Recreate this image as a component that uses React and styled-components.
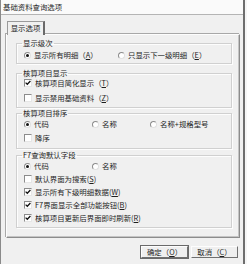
import React from "react";
import styled, { createGlobalStyle } from "styled-components";

const GlobalStyle = createGlobalStyle`
  * { box-sizing: border-box; }
  html, body { margin: 0; padding: 0; background: #f0f0f0; }
  body {
    font-family: "Noto Sans CJK SC", "Liberation Sans", sans-serif;
    font-size: 7.4px;
    color: #1e1e1e;
  }
`;

function App() {
  return (
    <>
      <GlobalStyle />
      <Window>
        <TitleBar>基础资料查询选项</TitleBar>
        <Body>
          <TabStrip>
            <Tab>显示选项</Tab>
          </TabStrip>
          <Panel>
            <Group $height={25} $pad={2} $top={0}>
              <Legend>显示级次</Legend>
              <Row>
                <Radio checked $width={94}>
                  显示所有明细（<u>A</u>）
                </Radio>
                <Radio>
                  只显示下一级明细（<u>E</u>）
                </Radio>
              </Row>
            </Group>

            <Group $height={39} $pad={0} $gap={3} $top={5}>
              <Legend>核算项目显示</Legend>
              <Row>
                <Check checked>
                  核算项目简化显示（<u>T</u>）
                </Check>
              </Row>
              <Row>
                <Check>
                  显示禁用基础资料（<u>Z</u>）
                </Check>
              </Row>
            </Group>

            <Group $height={40} $pad={1} $gap={2} $top={1}>
              <Legend>核算项目排序</Legend>
              <Row>
                <Radio checked $width={68}>
                  代码
                </Radio>
                <Radio $width={58}>名称</Radio>
                <Radio>名称+规格型号</Radio>
              </Row>
              <Row>
                <Check>降序</Check>
              </Row>
            </Group>

            <Group $height={77} $pad={1} $gap={1} $top={2}>
              <Legend>F7查询默认字段</Legend>
              <Row>
                <Radio checked $width={68}>
                  代码
                </Radio>
                <Radio>名称</Radio>
              </Row>
              <Row>
                <Check>
                  默认界面为搜索(<u>S</u>)
                </Check>
              </Row>
              <Row>
                <Check checked>
                  显示所有下级明细数据(<u>W</u>)
                </Check>
              </Row>
              <Row>
                <Check checked>
                  F7界面显示全部功能按钮(<u>B</u>)
                </Check>
              </Row>
              <Row>
                <Check checked>
                  核算项目更新后界面即时刷新(<u>R</u>)
                </Check>
              </Row>
            </Group>
          </Panel>
          <Buttons>
            <Button $default>
              确定（<u>O</u>）
            </Button>
            <Button>
              取消（<u>C</u>）
            </Button>
          </Buttons>
        </Body>
      </Window>
    </>
  );
}

function Radio({ checked, children, $width }) {
  return (
    <Option $width={$width}>
      <RadioMark>{checked && <Dot />}</RadioMark>
      <span>{children}</span>
    </Option>
  );
}

function Check({ checked, children }) {
  return (
    <Option>
      <CheckMark>
        {checked && (
          <svg width="6" height="6" viewBox="0 0 6 6">
            <path
              d="M0.6 2.6 L2.3 4.3 L5.4 1"
              fill="none"
              stroke="#111"
              strokeWidth="1.3"
            />
          </svg>
        )}
      </CheckMark>
      <span>{children}</span>
    </Option>
  );
}

export default App;

const Window = styled.div`
  width: 247px;
  height: 264px;
  display: flex;
  flex-direction: column;
  background: #f0f0f0;
  border-left: 1px solid #8a8a8a;
  border-right: 3px solid #f6f6f6;
  position: relative;
  &::after {
    content: "";
    position: absolute;
    top: 0;
    bottom: 0;
    right: -1px;
    width: 2px;
    background: #6e6e6e;
  }
`;

const TitleBar = styled.div`
  height: 15px;
  line-height: 14px;
  padding-left: 2px;
  background: #fafafa;
  border-bottom: 1px solid #b4b4b4;
  flex-shrink: 0;
`;

const Body = styled.div`
  flex: 1;
  padding: 6px 0 0 5px;
  display: flex;
  flex-direction: column;
`;

const TabStrip = styled.div`
  display: flex;
  padding-left: 1px;
  height: 13px;
`;

const Tab = styled.div`
  width: 38px;
  height: 14px;
  line-height: 12px;
  text-align: center;
  background: #f0f0f0;
  border-top: 1px solid #9a9a9a;
  border-left: 1px solid #9a9a9a;
  border-right: 2px solid #6a6a6a;
  position: relative;
  z-index: 1;
`;

const Panel = styled.div`
  width: 234px;
  height: 204px;
  padding: 4px 0 0 9px;
  border-top: 1px solid #fdfdfd;
  border-left: 1px solid #fdfdfd;
  border-right: 1px solid #8c8c8c;
  border-bottom: 1px solid #8c8c8c;
  box-shadow: inset -1px -1px 0 #c4c4c4, -1px -1px 0 #a8a8a8;
  display: flex;
  flex-direction: column;
`;

const Group = styled.fieldset`
  margin: ${(p) => p.$top}px 0 0 0;
  width: 216px;
  height: ${(p) => p.$height}px;
  padding: ${(p) => p.$pad}px 0 0 7px;
  border: 1px solid #d0d0d0;
  box-shadow: 1px 1px 0 #fdfdfd, inset 1px 1px 0 #fdfdfd;
  display: flex;
  flex-direction: column;
  gap: ${(p) => p.$gap || 0}px;
  min-width: 0;
`;

const Legend = styled.legend`
  padding: 0 1px;
  margin-left: -2px;
  line-height: 8px;
  height: 8px;
`;

const Row = styled.div`
  display: flex;
  align-items: center;
  height: 12px;
`;

const Option = styled.label`
  display: flex;
  align-items: center;
  gap: 2px;
  width: ${(p) => (p.$width ? `${p.$width}px` : "auto")};
  white-space: nowrap;
  line-height: 12px;
  u {
    text-decoration-thickness: 0.6px;
    text-underline-offset: 1px;
  }
`;

const RadioMark = styled.span`
  width: 7px;
  height: 7px;
  border-radius: 50%;
  background: #fff;
  border: 1px solid #8c8c8c;
  border-right-color: #e0e0e0;
  border-bottom-color: #e0e0e0;
  display: flex;
  align-items: center;
  justify-content: center;
  margin-right: 1px;
`;

const Dot = styled.span`
  width: 3px;
  height: 3px;
  border-radius: 50%;
  background: #111;
`;

const CheckMark = styled.span`
  width: 8px;
  height: 8px;
  background: #fff;
  border: 1px solid #8c8c8c;
  border-right-color: #e6e6e6;
  border-bottom-color: #e6e6e6;
  display: flex;
  align-items: center;
  justify-content: center;
  margin-right: 1px;
`;

const Buttons = styled.div`
  display: flex;
  justify-content: flex-end;
  gap: 3px;
  padding-right: 6px;
  margin-top: 8px;
`;

const Button = styled.div`
  width: 47px;
  height: 12px;
  line-height: 10px;
  text-align: center;
  background: #efefef;
  border: 1px solid #fdfdfd;
  border-right-color: #707070;
  border-bottom-color: #707070;
  outline: ${(p) => (p.$default ? "1px solid #6a6a6a" : "none")};
  outline-offset: 0;
  u {
    text-decoration-thickness: 0.6px;
    text-underline-offset: 1px;
  }
`;
